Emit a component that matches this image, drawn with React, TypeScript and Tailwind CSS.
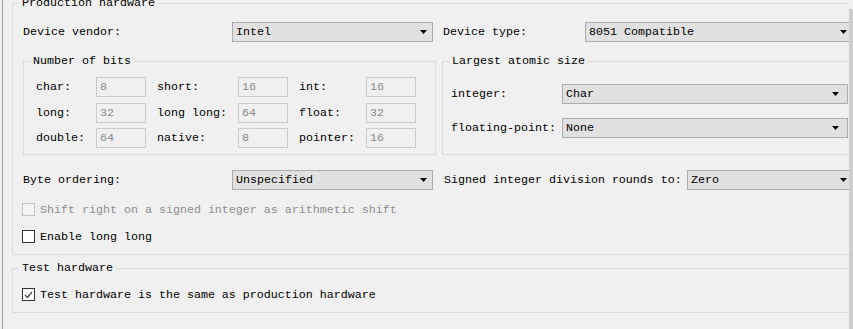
type SelectProps = {
  value: string;
  className?: string;
  arrowClass?: string;
};

function Select({ value, className = "", arrowClass = "pr-[5px]" }: SelectProps) {
  return (
    <div
      className={`flex h-[20px] items-center justify-between border border-[#adadad] bg-[#e1e1e1] pl-[3px] ${arrowClass} ${className}`}
    >
      <span className="whitespace-pre">{value}</span>
      <svg width="7" height="4" viewBox="0 0 7 4" className="shrink-0">
        <polygon points="0,0 7,0 3.5,4" fill="#000" />
      </svg>
    </div>
  );
}

type FieldProps = {
  label: string;
  value: string;
  labelClass: string;
};

function Field({ label, value, labelClass }: FieldProps) {
  return (
    <>
      <span className={`whitespace-pre ${labelClass}`}>{label}</span>
      <div className="flex h-[20px] w-[50px] items-center border border-[#cccccc] bg-[#f0f0f0] pl-[3px] text-[#8a8a8a]">
        {value}
      </div>
    </>
  );
}

type CheckProps = {
  label: string;
  checked?: boolean;
  disabled?: boolean;
  className?: string;
};

function Check({ label, checked = false, disabled = false, className = "" }: CheckProps) {
  return (
    <div className={`-ml-px flex h-[13px] items-center ${className}`}>
      <div
        className={`flex h-[13px] w-[13px] shrink-0 items-center justify-center border ${
          disabled ? "border-[#c4c4c4] bg-[#f4f4f4]" : "border-[#333333] bg-white"
        }`}
      >
        {checked && (
          <svg width="9" height="8" viewBox="0 0 9 8">
            <polyline points="1,4 3.5,6.5 8,1" fill="none" stroke="#4a4a4a" strokeWidth="1.3" />
          </svg>
        )}
      </div>
      <span className={`ml-[5px] whitespace-pre ${disabled ? "text-[#8d8d8d]" : ""}`}>{label}</span>
    </div>
  );
}

function Legend({ children }: { children: string }) {
  return <legend className="ml-[6px] px-[3px] whitespace-pre">{children}</legend>;
}

export default function App() {
  return (
    <div className="flex h-[329px] w-[853px] overflow-hidden bg-[#f0f0f0] font-['Liberation_Mono','DejaVu_Sans_Mono',monospace] text-[11.67px] leading-[14px] text-black">
      <div className="ml-[2px] w-px shrink-0 bg-[#a0a0a0]" />

      <div className="ml-[9px] w-[837px] shrink-0 overflow-hidden">
        <div className="-mt-[4px] w-[851px]">
          <fieldset className="border border-[#dcdcdc]">
            <Legend>Production hardware</Legend>
            <div className="pl-[10px] pr-[9px] pb-[11px]">
              <div className="mt-[12px] flex items-center">
                <span className="w-[209px] shrink-0">Device vendor:</span>
                <Select value="Intel" className="w-[201px]" />
                <span className="ml-[10px] w-[142px] shrink-0">Device type:</span>
                <Select value="8051 Compatible" className="flex-1" />
              </div>

              <div className="mt-[12px] flex">
                <fieldset className="w-[413px] shrink-0 border border-[#dcdcdc]">
                  <Legend>Number of bits</Legend>
                  <div className="pl-[12px] pt-[9px] pb-[6px]">
                    <div className="flex items-center">
                      <Field label="char:" value="8" labelClass="w-[60px]" />
                      <Field label="short:" value="16" labelClass="ml-[11px] w-[81px]" />
                      <Field label="int:" value="16" labelClass="ml-[11px] w-[67px]" />
                    </div>
                    <div className="mt-[6px] flex items-center">
                      <Field label="long:" value="32" labelClass="w-[60px]" />
                      <Field label="long long:" value="64" labelClass="ml-[11px] w-[81px]" />
                      <Field label="float:" value="32" labelClass="ml-[11px] w-[67px]" />
                    </div>
                    <div className="mt-[5px] flex items-center">
                      <Field label="double:" value="64" labelClass="w-[60px]" />
                      <Field label="native:" value="8" labelClass="ml-[11px] w-[81px]" />
                      <Field label="pointer:" value="16" labelClass="ml-[11px] w-[67px]" />
                    </div>
                  </div>
                </fieldset>

                <fieldset className="ml-[6px] flex-1 border border-[#dcdcdc]">
                  <Legend>Largest atomic size</Legend>
                  <div className="pl-[8px] pt-[16px]">
                    <div className="flex items-center">
                      <span className="w-[111px] shrink-0">integer:</span>
                      <Select value="Char" className="w-[286px]" arrowClass="pr-[8px]" />
                    </div>
                    <div className="mt-[14px] flex items-center">
                      <span className="w-[111px] shrink-0">floating-point:</span>
                      <Select value="None" className="w-[286px]" arrowClass="pr-[8px]" />
                    </div>
                  </div>
                </fieldset>
              </div>

              <div className="mt-[15px] flex items-center">
                <span className="w-[209px] shrink-0">Byte ordering:</span>
                <Select value="Unspecified" className="w-[201px]" />
                <span className="ml-[11px] w-[243px] shrink-0 whitespace-pre">Signed integer division rounds to:</span>
                <Select value="Zero" className="flex-1" />
              </div>

              <Check
                label="Shift right on a signed integer as arithmetic shift"
                disabled
                className="mt-[13px]"
              />
              <Check label="Enable long long" className="mt-[14px]" />
            </div>
          </fieldset>

          <fieldset className="mt-[6px] border border-[#dcdcdc]">
            <Legend>Test hardware</Legend>
            <div className="pl-[10px] pt-[13px] pb-[11px]">
              <Check label="Test hardware is the same as production hardware" checked />
            </div>
          </fieldset>
        </div>
      </div>

      <div className="mt-[9px] w-[4px] shrink-0 bg-[#cdcdcd]" />
    </div>
  );
}
